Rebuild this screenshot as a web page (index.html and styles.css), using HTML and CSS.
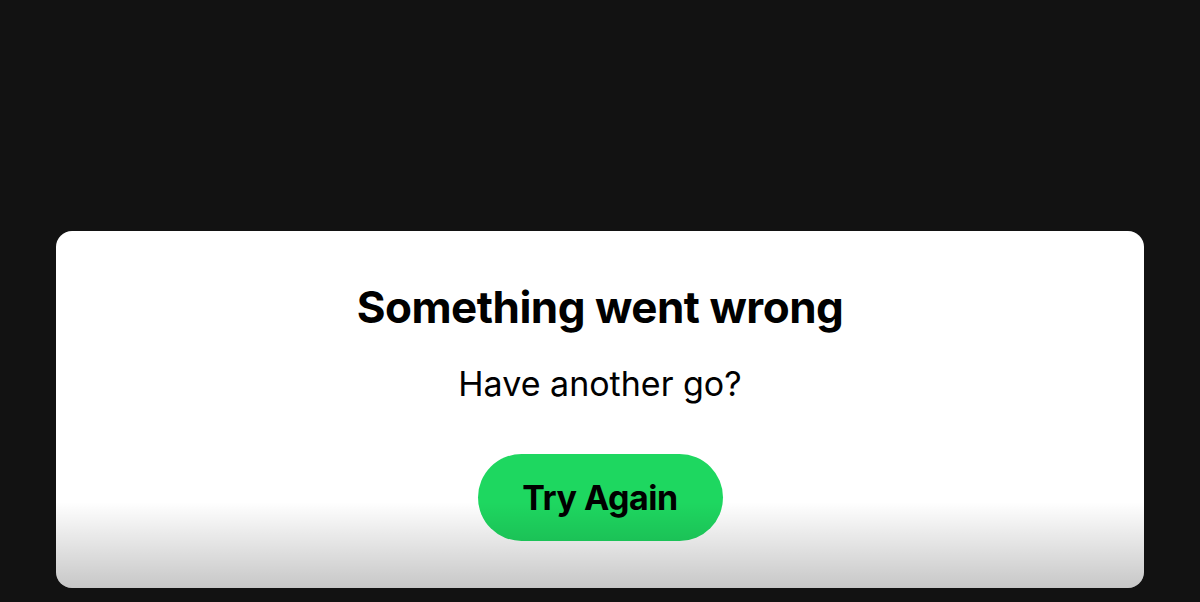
FILE: index.html
```html
<!DOCTYPE html>
<html lang="en">
<head>
    <meta charset="UTF-8">
    <meta name="viewport" content="width=device-width, initial-scale=1.0">
    <title>Something went wrong</title>
    <link rel="stylesheet" href="styles.css">
</head>
<body>
    <div class="page">
        <div class="error-card">
            <h1 class="error-title">Something went wrong</h1>
            <p class="error-text">Have another go?</p>
            <button class="retry-button">Try Again</button>
            <div class="card-fade"></div>
        </div>
    </div>
</body>
</html>
```

FILE: styles.css
```css
html, body {
    height: 100%;
    margin: 0;
    padding: 0;
}
body {
    background-color: #121212;
    font-family: Inter, "Noto Sans", Arial, sans-serif;
    color: #000;
}
.page {
    height: 100%;
    display: flex;
    flex-direction: column;
    justify-content: flex-end;
    padding: 0 56px 14px;
    box-sizing: border-box;
}
.error-card {
    position: relative;
    height: 357px;
    background-color: #fff;
    border-radius: 16px;
    overflow: hidden;
    display: flex;
    flex-direction: column;
    align-items: center;
    box-sizing: border-box;
    padding-top: 50px;
}
.error-title {
    margin: 0;
    font-size: 44px;
    font-weight: 700;
    letter-spacing: -0.5px;
    line-height: 52px;
}
.error-text {
    margin: 31px 0 0;
    font-size: 34px;
    line-height: 40px;
}
.retry-button {
    margin-top: 50px;
    width: 245px;
    height: 87px;
    border: none;
    border-radius: 44px;
    background-color: #1ed760;
    font-family: inherit;
    font-size: 34px;
    font-weight: 700;
    letter-spacing: -0.5px;
    color: #000;
}
.card-fade {
    position: absolute;
    left: 0;
    right: 0;
    bottom: 0;
    height: 86px;
    background: linear-gradient(to bottom, rgba(0, 0, 0, 0), rgba(0, 0, 0, 0.22));
    pointer-events: none;
}
```
